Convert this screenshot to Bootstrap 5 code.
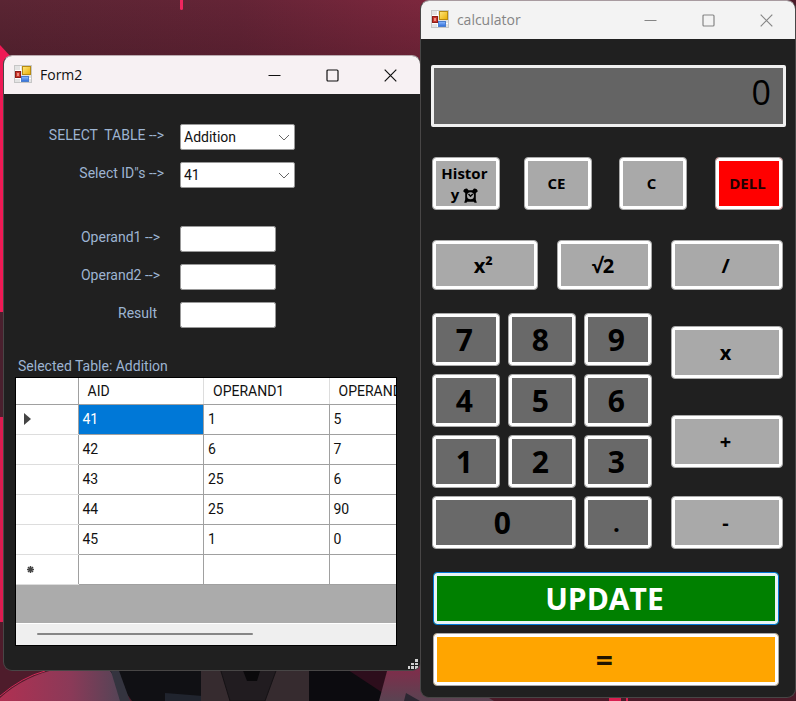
<!DOCTYPE html>
<html lang="en">
<head>
<meta charset="utf-8">
<meta name="viewport" content="width=device-width, initial-scale=1">
<title>calculator</title>
<link href="https://cdn.jsdelivr.net/npm/bootstrap@5.3.0/dist/css/bootstrap.min.css" rel="stylesheet">
<style>
  body { background: #4a2230; font-family: "Open Sans", "Noto Sans", sans-serif; }
  .desktop { min-height: 100vh; padding: 0 0 2px 3px; isolation: isolate; }
  .wallpaper { z-index: -1; }

  .win { background: #202020; border: 1px solid #484646; border-radius: 9px; overflow: hidden; min-width: 0; }
  .win-form { flex: 418 1 0; margin: 55px -1px 0 0; z-index: 1; position: relative; border-top-color: #b9a9ae; }
  .win-calc { flex: 376 1 0; border-top-color: #a89ba0; }
  .title-bar { height: 38px; margin: 0 -1px; padding: 0 1px 2px 11px; background: #f7f1f3; color: #111; font-size: 14px; }
  .win-calc .title-bar { background: #f3f3f3; color: #858585; }
  .cap-btn { width: 58px; height: 36px; border: 0; background: none; color: inherit; padding: 0; }

  .form-body { padding: 30px 23px 24px 11px; font-family: Roboto, "Liberation Sans", sans-serif; font-size: 14px; color: #9db4d2; }
  .field { display: grid; grid-template-columns: 165px 1fr; }
  .field label { line-height: 22px; text-align: right; padding-right: 16px; white-space: pre; }
  .field .lbl-operand { padding-right: 20px; }
  .field .lbl-result { padding-right: 23px; }
  .fields { row-gap: 12px; }
  .fields + .fields { margin-top: 38px; }
  .field .form-select, .field .form-control { height: 26px; border: 1px solid #999; border-radius: 2px; background-color: #fff; color: #111; font-size: 14px; line-height: 20px; padding: 2px 3px; }
  .field .form-select { width: 115px; padding-right: 24px; background-repeat: no-repeat; background-position: right 4px center; background-size: 12px 12px;
    background-image: url("data:image/svg+xml,%3csvg xmlns='http://www.w3.org/2000/svg' viewBox='0 0 12 12'%3e%3cpath fill='none' stroke='%23666' d='M1 4l5 5 5-5'/%3e%3c/svg%3e"); }
  .field .form-control { width: 96px; }

  .table-caption { margin: 27px 0 0 3px; line-height: 22px; }
  .grid-box { border: 1px solid #000; background: #ababab; height: 269px; overflow: hidden; }
  .grid-scroll { overflow: hidden; }
  .data-grid { table-layout: fixed; width: 439px; border-collapse: collapse; background: #fff; color: #111; }
  .data-grid th, .data-grid td { height: 30px; padding: 0 4px; font-weight: 400; border: 1px solid #a0a0a0; border-left: 0; border-top: 0; line-height: 20px; white-space: nowrap; }
  .data-grid thead th { height: 26px; padding-left: 9px; border-right-color: #ddd; }
  .data-grid thead th:first-child { border-right-color: #a0a0a0; }
  .data-grid tbody th { padding-left: 8px; border-bottom-color: #ddd; }
  .data-grid .picked { background: #0078d7; color: #fff; }
  .col-mark { width: 62px; }
  .data-grid svg { display: block; }
  .scroll-track { height: 22px; background: #efefef; border-top: 1px solid #fff; padding: 9px 21px; }
  .scroll-thumb { height: 2px; width: 64%; background: #868686; border-radius: 1px; }
  .grip { position: absolute; right: 2px; bottom: 1px; }

  .calc-body { padding: 26px 9px 11px 10px; }
  .readout { height: 62px; background: #646464; border: 3px solid #f0f0f0; border-radius: 2px; color: #000; font-size: 34px; line-height: 48px; text-align: right; padding: 0 12px 8px; }
  .keys { padding: 30px 3px 0 1px; }
  .key { height: 53px; border: 1px solid #aaa; border-radius: 4px; box-shadow: inset 0 0 0 3px #fff; background: #a9a9a9; color: #000; font-weight: 700; font-size: 15px; line-height: 21px; padding: 0 8px 0 5px; min-width: 0; }
  .key-del { background: #f00; color: #200000; }
  .row-top { display: grid; grid-template-columns: 92fr 95fr 96fr 68fr; }
  .row-top .key { width: 68px; }
  .row-ops { display: grid; grid-template-columns: 106fr 96fr 112fr; column-gap: 19px; margin-top: 30px; }
  .row-ops .key, .side-ops .key { font-size: 20px; }
  .row-ops .key { height: 50px; }
  .pad-area { display: grid; grid-template-columns: 220fr 112fr; column-gap: 19px; margin-top: 23px; }
  .num-pad { display: grid; grid-template-columns: repeat(3, 1fr); gap: 8px; }
  .num-pad .key { background: #696969; font-size: 30px; }
  .num-pad .key-point { font-size: 24px; }
  .key-zero { grid-column: span 2; }
  .side-ops { padding-top: 13px; }
  .side-ops .key + .key { margin-top: 36px; }
  .side-ops .key:last-child { margin-top: auto; }
  .wide-keys { margin: 23px 4px 0 1px; gap: 8px; }
  .wide-keys .key { font-size: 30px; }
  .wide-keys .key-update { background: #008000; color: #fff; border-color: #0078d7; box-shadow: inset 0 0 0 3px #e8f4f4; }
  .wide-keys .key-equals { background: #ffa500; color: #201400; }
</style>
<script src="https://cdn.jsdelivr.net/npm/bootstrap@5.3.0/dist/js/bootstrap.bundle.min.js"></script>
</head>
<body>
<svg width="0" height="0" class="position-absolute" aria-hidden="true">
  <defs>
    <linearGradient id="yel" x2="1" y2="1"><stop stop-color="#ffe780"/><stop offset="1" stop-color="#e9ae00"/></linearGradient>
    <linearGradient id="blu" x2="0" y2="1"><stop stop-color="#8fbcff"/><stop offset="1" stop-color="#2c6bd8"/></linearGradient>
    <symbol id="appIcon" viewBox="0 0 18 18">
      <rect x=".5" y=".5" width="17" height="17" fill="#e3e3e3" stroke="#c6c6c6"/>
      <path d="M1 5.500h7M1 13.500h16M6.500 1v16" stroke="#fff"/>
      <rect x="1.500" y="6.500" width="5" height="6" fill="#c8352b" stroke="#8d1d17"/>
      <rect x="3" y="8" width="2" height="3" fill="#ee8d80"/>
      <rect x="8.500" y="1.500" width="8" height="8" fill="url(#yel)" stroke="#b88a10"/>
      <rect x="7.500" y="11.500" width="7" height="5" fill="url(#blu)" stroke="#4b7dcc"/>
    </symbol>
    <symbol id="icMin" viewBox="0 0 13 13"><path d="M.5 6.500h12" stroke="currentColor"/></symbol>
    <symbol id="icMax" viewBox="0 0 13 13"><rect x="1" y="1" width="11" height="11" rx="1" fill="none" stroke="currentColor" stroke-width="1.200"/></symbol>
    <symbol id="icClose" viewBox="0 0 13 13"><path d="M.7.7l11.600 11.600M12.300.7L.7 12.300" stroke="currentColor" stroke-width="1.200"/></symbol>
  </defs>
</svg>

<main class="desktop d-flex align-items-start position-relative overflow-hidden">
  <svg class="wallpaper position-absolute top-0 start-0 w-100 h-100" viewBox="0 0 796 701" preserveAspectRatio="none" aria-hidden="true">
    <defs>
      <linearGradient id="sky"><stop stop-color="#5a2533"/><stop offset=".3" stop-color="#642436"/><stop offset=".53" stop-color="#7c273d"/><stop offset=".75" stop-color="#a03a5c"/><stop offset="1" stop-color="#4a1a28"/></linearGradient>
      <linearGradient id="shade" x2="0" y2="1"><stop stop-color="#30101a" stop-opacity="0"/><stop offset="1" stop-color="#30101a" stop-opacity=".3"/></linearGradient>
      <linearGradient id="coatL"><stop stop-color="#b03052"/><stop offset=".55" stop-color="#8a3a58"/><stop offset="1" stop-color="#4a4656"/></linearGradient>
      <linearGradient id="coatR" x2="0" y2="1"><stop stop-color="#8a2748"/><stop offset="1" stop-color="#5a4352"/></linearGradient>
    </defs>
    <rect width="796" height="701" fill="#4a1a28"/>
    <rect width="796" height="66" fill="url(#sky)"/>
    <rect width="420" height="66" fill="url(#shade)"/>
    <rect x="180" y="-3" width="3" height="13" rx="1.500" fill="#f0265f"/>
    <path d="M0 45L12 58V312H0Z" fill="#ee1a55"/>
    <path d="M0 312h8v105H0Z" fill="#4a202e"/>
    <path d="M0 417h8v205H0Z" fill="#dc1c50"/>
    <rect y="622" width="420" height="79" fill="#4e1c2b"/>
    <path d="M0 698Q25 675 62 668H112L130 701H0Z" fill="url(#coatL)"/>
    <path d="M0 696Q22 677 45 671" fill="none" stroke="#d02a58"/>
    <path d="M108 668H202V701H132Z" fill="#101014"/>
    <path d="M110 668h8l12 33h-10Z" fill="#34343f"/>
    <path d="M165 693l38 3v5h-38Z" fill="#20242e"/>
    <path d="M201 668H309V701H201Z" fill="#362b2f"/>
    <path d="M220 668l10 33h35l12-33Z" fill="#211c20" stroke="#151215"/>
    <path d="M242 668l5 13h10l4-13Z" fill="#0a090b"/>
    <path d="M309 668h84l-12 33h-72Z" fill="#0c0b0f"/>
    <path d="M345 668h48l-10 25Z" fill="#2d0e1c"/>
    <path d="M390 660h36l68 41H379Z" fill="url(#coatR)"/>
    <path d="M406 693l14 8h-16Z" fill="#2c2732"/>
    <path d="M609 697h12v4h-12ZM626 697h2v4h-2Z" fill="#d81f50"/>
  </svg>

  <section class="win win-form" aria-label="Form2">
    <header class="title-bar d-flex align-items-center">
      <svg width="18" height="18" class="me-2" aria-hidden="true"><use href="#appIcon"/></svg>
      <span class="me-auto">Form2</span>
      <button type="button" class="cap-btn" aria-label="Minimize"><svg width="13" height="13"><use href="#icMin"/></svg></button>
      <button type="button" class="cap-btn" aria-label="Maximize"><svg width="13" height="13"><use href="#icMax"/></svg></button>
      <button type="button" class="cap-btn" aria-label="Close"><svg width="13" height="13"><use href="#icClose"/></svg></button>
    </header>
    <div class="form-body">
      <div class="fields d-grid">
        <div class="field"><label for="tableSel">SELECT  TABLE --&gt;</label><select id="tableSel" class="form-select"><option>Addition</option></select></div>
        <div class="field"><label for="idSel">Select ID"s --&gt;</label><select id="idSel" class="form-select"><option>41</option></select></div>
      </div>
      <div class="fields d-grid">
        <div class="field"><label for="op1" class="lbl-operand">Operand1 --&gt;</label><input id="op1" type="text" class="form-control"></div>
        <div class="field"><label for="op2" class="lbl-operand">Operand2 --&gt;</label><input id="op2" type="text" class="form-control"></div>
        <div class="field"><label for="res" class="lbl-result">Result</label><input id="res" type="text" class="form-control"></div>
      </div>
      <p class="table-caption" id="gridName">Selected Table: Addition</p>
      <div class="grid-box d-flex flex-column">
        <div class="grid-scroll">
          <table class="data-grid" aria-labelledby="gridName">
            <colgroup><col class="col-mark"><col><col><col></colgroup>
            <thead><tr><th></th><th>AID</th><th>OPERAND1</th><th>OPERAND2</th></tr></thead>
            <tbody>
              <tr><th><svg width="7" height="12" aria-hidden="true"><path d="M0 0l7 6-7 6Z" fill="#444"/></svg></th><td class="picked">41</td><td>1</td><td>5</td></tr>
              <tr><th></th><td>42</td><td>6</td><td>7</td></tr>
              <tr><th></th><td>43</td><td>25</td><td>6</td></tr>
              <tr><th></th><td>44</td><td>25</td><td>90</td></tr>
              <tr><th></th><td>45</td><td>1</td><td>0</td></tr>
              <tr><th><svg width="13" height="9" aria-hidden="true"><path d="M6.500 1v7M3 4.500h7M4 2l5 5M9 2L4 7" stroke="#444" stroke-width="1.500"/></svg></th><td></td><td></td><td></td></tr>
            </tbody>
          </table>
        </div>
        <div class="scroll-track mt-auto"><div class="scroll-thumb"></div></div>
      </div>
    </div>
    <svg class="grip" width="10" height="10" aria-hidden="true"><path d="M7 0h3v3H7ZM7 4h3v2H7ZM3 4h3v2H3ZM7 7h3v3H7ZM3 7h3v3H3ZM0 7h2v3H0Z" fill="#d0d0d0"/></svg>
  </section>

  <section class="win win-calc" aria-label="calculator">
    <header class="title-bar d-flex align-items-center">
      <svg width="18" height="18" class="me-2" aria-hidden="true"><use href="#appIcon"/></svg>
      <span class="me-auto">calculator</span>
      <button type="button" class="cap-btn" aria-label="Minimize"><svg width="13" height="13"><use href="#icMin"/></svg></button>
      <button type="button" class="cap-btn" aria-label="Maximize"><svg width="13" height="13"><use href="#icMax"/></svg></button>
      <button type="button" class="cap-btn" aria-label="Close"><svg width="13" height="13"><use href="#icClose"/></svg></button>
    </header>
    <div class="calc-body">
      <input type="text" class="readout w-100 d-block" value="0" aria-label="Display">
      <div class="keys">
        <div class="row-top">
          <button type="button" class="key">Histor<br>y <svg width="15" height="15" viewBox="0 0 15 15" aria-hidden="true"><path d="M.3 3.500Q.5.500 4 .6L5.500 2.200h4L11 .6Q14.500.500 14.700 3.500L12.800 5v6.500l1 3.200h-2.200l-.8-.9H4.200l-.8.900H1.200l1-3.200V5Z"/><circle cx="7.500" cy="7.800" r="3.500" fill="#a9a9a9"/><path d="M5.500 6l2 2.200L9.800 6" fill="none" stroke="#000" stroke-width="1.400"/></svg></button>
          <button type="button" class="key">CE</button>
          <button type="button" class="key">C</button>
          <button type="button" class="key key-del">DELL</button>
        </div>
        <div class="row-ops">
          <button type="button" class="key">x²</button>
          <button type="button" class="key">√2</button>
          <button type="button" class="key">/</button>
        </div>
        <div class="pad-area">
          <div class="num-pad">
            <button type="button" class="key">7</button>
            <button type="button" class="key">8</button>
            <button type="button" class="key">9</button>
            <button type="button" class="key">4</button>
            <button type="button" class="key">5</button>
            <button type="button" class="key">6</button>
            <button type="button" class="key">1</button>
            <button type="button" class="key">2</button>
            <button type="button" class="key">3</button>
            <button type="button" class="key key-zero">0</button>
            <button type="button" class="key key-point">.</button>
          </div>
          <div class="side-ops d-flex flex-column">
            <button type="button" class="key">x</button>
            <button type="button" class="key">+</button>
            <button type="button" class="key">-</button>
          </div>
        </div>
        <div class="wide-keys d-grid">
          <button type="button" class="key key-update">UPDATE</button>
          <button type="button" class="key key-equals">=</button>
        </div>
      </div>
    </div>
  </section>
</main>
</body>
</html>
